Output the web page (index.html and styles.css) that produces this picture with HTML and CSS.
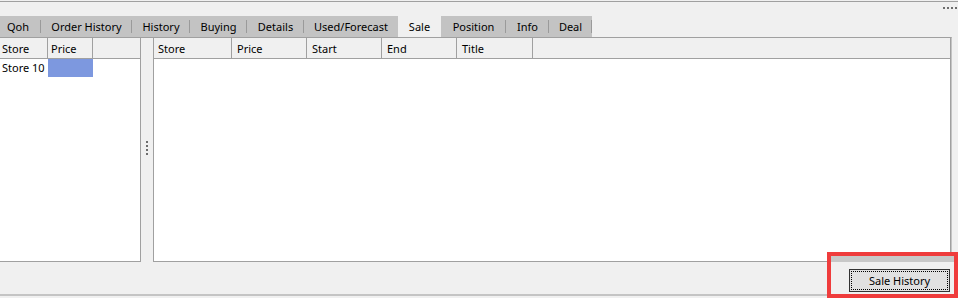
FILE: index.html
```html
<!DOCTYPE html>
<html>
<head>
<meta charset="utf-8">
<link rel="stylesheet" href="styles.css">
</head>
<body>
<div class="top"><div class="grip"><i></i><i></i><i></i><i></i></div></div>
<div class="tabs">
  <div class="tab sep t-qoh">Qoh</div>
  <div class="tab sep t-order">Order History</div>
  <div class="tab sep t-hist">History</div>
  <div class="tab sep t-buy">Buying</div>
  <div class="tab sep t-det">Details</div>
  <div class="tab t-used">Used/Forecast</div>
  <div class="tab active t-sale">Sale</div>
  <div class="tab sep t-pos">Position</div>
  <div class="tab sep t-info">Info</div>
  <div class="tab sep t-deal">Deal</div>
</div>
<div class="panel">
  <div class="grid gl">
    <div class="hdr">
      <div class="hc w-ls">Store</div>
      <div class="hc w-lp">Price</div>
    </div>
    <div class="row">
      <div class="dc w-ls">Store 10</div>
      <div class="dc w-lp sel"></div>
    </div>
  </div>
  <div class="splitter"><div class="vgrip"><i></i><i></i><i></i><i></i></div></div>
  <div class="grid gr">
    <div class="hdr">
      <div class="hc w-rs">Store</div>
      <div class="hc w-r">Price</div>
      <div class="hc w-r">Start</div>
      <div class="hc w-r">End</div>
      <div class="hc w-rt">Title</div>
    </div>
  </div>
</div>
<div class="bottom">
  <button class="btn"><span>Sale History</span></button>
</div>
<div class="highlight"><div class="band"></div></div>
</body>
</html>
```
FILE: styles.css
```css
* { box-sizing: border-box; }
html, body { margin: 0; padding: 0; }
body {
  background: #f0f0f0;
  font-family: "Noto Sans", "Open Sans", sans-serif;
  font-size: 11px;
  color: #000;
  width: 958px;
  height: 298px;
  overflow: hidden;
  position: relative;
}
.top {
  margin-top: 1px;
  height: 15px;
  border-top: 1px solid #a0a0a0;
  display: flex;
  justify-content: flex-end;
  padding: 5px 1px 0 0;
}
.grip { display: flex; gap: 2px; height: 2px; }
.grip i { display: block; width: 2px; height: 2px; background: #6d6d6d; }

.tabs {
  display: flex;
  width: 592px;
  height: 21px;
  background: #c3c3c3;
}
.tab {
  position: relative;
  height: 21px;
  line-height: 22px;
  text-align: center;
  white-space: nowrap;
}
.tab.sep::after {
  content: "";
  position: absolute;
  right: 0;
  top: 4px;
  width: 1px;
  height: 13px;
  background: #9a9a9a;
}
.tab.active { background: #f0f0f0; }
.t-qoh { width: 41px; padding-right: 5px; }
.t-order { width: 91px; }
.t-hist { width: 58px; }
.t-buy { width: 57px; }
.t-det { width: 57px; }
.t-used { width: 94px; }
.t-sale { width: 43px; }
.t-pos { width: 65px; }
.t-info { width: 43px; }
.t-deal { width: 43px; }

.panel {
  display: flex;
  width: 952px;
  height: 225px;
  border-top: 1px solid #a0a0a0;
  border-right: 1px solid #c4c4c4;
}
.grid {
  background: #fff;
  border-bottom: 1px solid #a0a0a0;
  height: 224px;
}
.gl { width: 141px; border-right: 1px solid #a0a0a0; }
.gr { flex: 1; border-left: 1px solid #a0a0a0; border-right: 1px solid #a0a0a0; }
.hdr {
  display: flex;
  height: 21px;
  background: #f0f0f0;
  border-bottom: 1px solid #a0a0a0;
}
.hc {
  height: 20px;
  line-height: 21px;
  padding-left: 2px;
  border-right: 1px solid #a0a0a0;
  white-space: nowrap;
}
.w-ls { width: 48px; }
.w-lp { width: 45px; padding-left: 3px; }
.w-rs { width: 78px; padding-left: 4px; }
.w-r { width: 75px; padding-left: 5px; }
.w-rt { width: 76px; padding-left: 5px; }
.row { display: flex; height: 18px; }
.dc { height: 18px; line-height: 18px; padding-left: 2px; white-space: nowrap; }
.dc.w-ls { width: 48px; }
.dc.w-lp { width: 45px; }
.sel { background: #7d98df; }

.splitter {
  width: 12px;
  display: flex;
  justify-content: center;
  padding-top: 103px;
}
.vgrip { display: flex; flex-direction: column; gap: 2px; }
.vgrip i { display: block; width: 2px; height: 2px; background: #6d6d6d; }

.bottom {
  height: 34px;
  border-bottom: 2px solid #c4c4c4;
  display: flex;
  justify-content: flex-end;
  align-items: flex-start;
  padding: 7px 8px 0 0;
}
.btn {
  width: 101px;
  height: 23px;
  border: 1px solid #333;
  background: #e1e1e1;
  padding: 1px;
  margin: 0;
  font: inherit;
  color: #000;
  display: flex;
}
.btn span {
  flex: 1;
  border: 1px dotted #000;
  line-height: 18px;
  text-align: center;
}
.highlight {
  position: absolute;
  left: 827px;
  top: 252px;
  width: 131px;
  height: 46px;
  border: 4px solid #ef3c3c;
}
.band { height: 6px; background: #c8c8c8; }
```
